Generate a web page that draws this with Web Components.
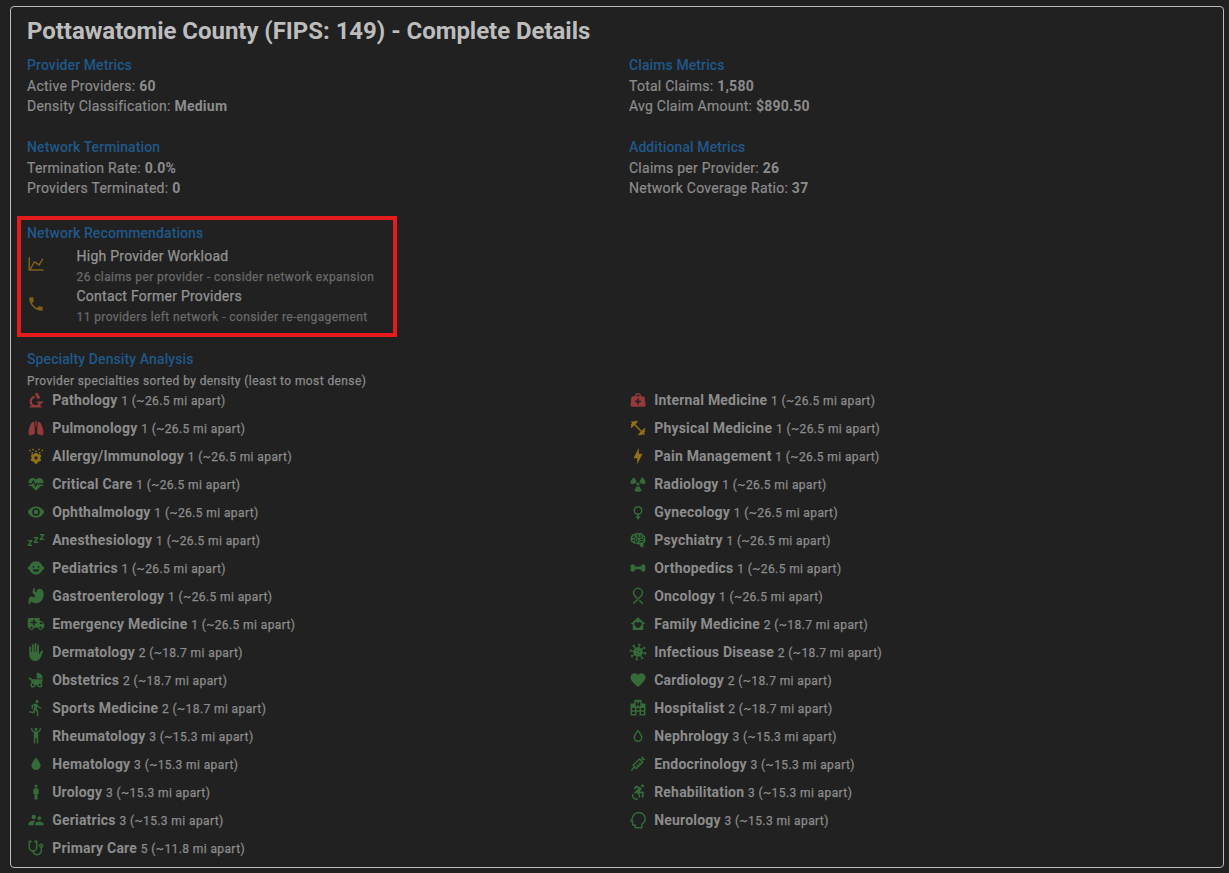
<!DOCTYPE html>
<html lang="en">
<head>
<meta charset="utf-8">
<title>County details</title>
<style>
html,body{margin:0;height:100%;background:#212121}
body{font-family:Roboto,"Liberation Sans",sans-serif;color:#8c8c8c;overflow:hidden}
</style>
</head>
<body>
<county-details></county-details>
<script>
const ICONS = {
  chart:'<path d="M16,11.78L20.24,4.45L21.97,5.45L16.74,14.5L10.23,10.75L5.46,19H22V21H2V3H4V17.54L9.5,8L16,11.78Z"/>',
  phone:'<path d="M6.62,10.79C8.06,13.62 10.38,15.94 13.21,17.38L15.41,15.18C15.69,14.9 16.08,14.82 16.43,14.93C17.55,15.3 18.75,15.5 20,15.5A1,1 0 0,1 21,16.5V20A1,1 0 0,1 20,21A17,17 0 0,1 3,4A1,1 0 0,1 4,3H7.5A1,1 0 0,1 8.5,4C8.5,5.25 8.7,6.45 9.07,7.57C9.18,7.92 9.1,8.31 8.82,8.59L6.62,10.79Z"/>',
  microscope:'<path d="M9.46,6.28L11.05,9C8.47,9.26 6.5,11.41 6.5,14A5,5 0 0,0 11.5,19C13.55,19 15.31,17.77 16.08,16H13.5V14H21.5V16H19.25C18.84,17.57 17.97,18.96 16.79,20H19.5V22H3.5V20H6.21C4.55,18.53 3.5,16.39 3.5,14C3.5,10.37 5.96,7.2 9.46,6.28M12.74,2.07L13.5,3.37L14.36,2.87L17.86,8.93L14.39,10.93L10.89,4.87L11.76,4.37L11,3.07L12.74,2.07Z"/>',
  lungs:'<path d="M11.2,2H12.8V10.2H11.2ZM9.9,4.6C8.2,2.8 6.4,4.4 5.1,6.9C3.2,10.4 2,14.8 2,18.6C2,21.4 3.2,22.3 5.4,21.6L9,20.2C10,19.8 10.4,19.2 10.4,18.2V11.4L9.9,10.9ZM14.1,4.6C15.8,2.8 17.6,4.4 18.9,6.9C20.8,10.4 22,14.8 22,18.6C22,21.4 20.8,22.3 18.6,21.6L15,20.2C14,19.8 13.6,19.2 13.6,18.2V11.4L14.1,10.9Z"/>',
  pollen:'<path fill-rule="evenodd" d="M12,7.6C13.5,7.6 14.6,8.6 14.7,9.8C17,8.9 19.2,10.3 18.8,12.4C18.6,13.4 18.1,14.1 17.3,14.6C19.4,16 19,18.7 16.9,19.3C16.1,19.5 15.4,19.5 14.7,19.2C14.6,21 13.5,22.3 12,22.3C10.5,22.3 9.4,21 9.3,19.2C7,20 4.9,18.9 5.1,16.8C5.2,15.8 5.8,15.1 6.7,14.6C4.6,13.3 4.8,10.5 7,9.8C7.8,9.5 8.6,9.5 9.3,9.8C9.4,8.6 10.5,7.6 12,7.6M12,12.4A2.2,2.2 0 1,0 12,16.8A2.2,2.2 0 1,0 12,12.4Z"/><path d="M3,3.5H5V5.5H3ZM6,7H8V9H6ZM7,2.2H9V4.2H7ZM10.8,4.7H12.8V6.5H10.8ZM15,2.2H17V4.2H15ZM16,6.7H18V8.7H16ZM19.4,3.5H21.4V5.5H19.4Z"/>',
  pulse:'<path d="M7.5,4A5.5,5.5 0 0,0 2,9.5C2,10 2.09,10.5 2.22,11H6.3L7.57,7.63C7.87,6.83 9.05,6.75 9.43,7.63L11.5,13L12.09,11.58C12.22,11.25 12.57,11 13,11H21.78C21.91,10.5 22,10 22,9.5A5.5,5.5 0 0,0 16.5,4C14.64,4 13,4.93 12,6.34C11,4.93 9.36,4 7.5,4M3,12.5A1,1 0 0,0 2,13.5A1,1 0 0,0 3,14.5H5.44L11,20C12,20.9 12,20.9 13,20L18.56,14.5H21A1,1 0 0,0 22,13.5A1,1 0 0,0 21,12.5H13.4L12.47,14.8C12.07,15.81 10.92,15.67 10.55,14.83L8.5,9.5L7.54,11.83C7.39,12.21 7.05,12.5 6.6,12.5H3Z"/>',
  eye:'<path d="M12,9A3,3 0 0,0 9,12A3,3 0 0,0 12,15A3,3 0 0,0 15,12A3,3 0 0,0 12,9M12,17A5,5 0 0,1 7,12A5,5 0 0,1 12,7A5,5 0 0,1 17,12A5,5 0 0,1 12,17M12,4.5C7,4.5 2.73,7.61 1,12C2.73,16.39 7,19.5 12,19.5C17,19.5 21.27,16.39 23,12C21.27,7.61 17,4.5 12,4.5Z"/>',
  sleep:'<path d="M23,12H17V10L20.39,6H17V4H23V6L19.62,10H23V12M15,16H9V14L12.39,10H9V8H15V10L11.62,14H15V16M7,20H1V18L4.39,14H1V12H7V14L3.62,18H7V20Z"/>',
  baby:'<path fill-rule="evenodd" d="M12,3C16,3 19.3,5.6 20.5,9.2C21.9,9.6 23,10.7 23,12C23,13.3 21.9,14.4 20.5,14.8C19.3,18.4 16,21 12,21C8,21 4.7,18.4 3.5,14.8C2.1,14.4 1,13.3 1,12C1,10.7 2.1,9.6 3.5,9.2C4.7,5.6 8,3 12,3M8.5,9.2A1.25,1.25 0 1,0 8.5,11.7A1.25,1.25 0 1,0 8.5,9.2M15.5,9.2A1.25,1.25 0 1,0 15.5,11.7A1.25,1.25 0 1,0 15.5,9.2M7.5,14C8.2,15.9 9.9,17 12,17C14.1,17 15.8,15.9 16.5,14Z"/>',
  stomach:'<path d="M8.5,1.5H10.5V4.5C10.5,6 11.3,7 12.6,7C12.6,4.2 14.4,2.4 17,2.4C20.4,2.4 22.3,5.3 22.3,9.6C22.3,16.2 18.2,21.6 12,21.6C9.5,21.6 7.3,20.7 6,19.4C5.1,19.6 4.8,20.4 4.8,22.3H2V20.5C2,17.2 2.6,14.4 4.4,13.1C5.7,12.2 7.3,12.6 8.4,13.4C9.5,14.1 10.8,13.4 10.6,12C10.3,10 8.2,9.4 7.4,7.3C6.8,5.7 8.5,4.2 8.5,1.5Z"/>',
  ambulance:'<path d="M18,18.5A1.5,1.5 0 0,0 19.5,17A1.5,1.5 0 0,0 18,15.5A1.5,1.5 0 0,0 16.5,17A1.5,1.5 0 0,0 18,18.5M19.5,9.5H17V12H21.46L19.5,9.5M6,18.5A1.5,1.5 0 0,0 7.5,17A1.5,1.5 0 0,0 6,15.5A1.5,1.5 0 0,0 4.5,17A1.5,1.5 0 0,0 6,18.5M20,8L23,12V17H21A3,3 0 0,1 18,20A3,3 0 0,1 15,17H9A3,3 0 0,1 6,20A3,3 0 0,1 3,17H1V6C1,4.89 1.89,4 3,4H17V8H20M8,6V9H5V11H8V14H10V11H13V9H10V6H8Z"/>',
  hand:'<path transform="matrix(-1 0 0 1 24 0)" d="M13 24C9.74 24 6.81 22 5.6 19L2.57 11.37C2.26 10.58 3 9.79 3.81 10.05L4.6 10.31C5.16 10.5 5.62 10.92 5.84 11.47L7.25 15H8V3.25C8 2.56 8.56 2 9.25 2C9.94 2 10.5 2.56 10.5 3.25V12H11.5V1.25C11.5 .56 12.06 0 12.75 0C13.44 0 14 .56 14 1.25V12H15V2.75C15 2.06 15.56 1.5 16.25 1.5S17.5 2.06 17.5 2.75V12H18.5V5.75C18.5 5.06 19.06 4.5 19.75 4.5S21 5.06 21 5.75V16C21 20.42 17.42 24 13 24Z"/>',
  carriage:'<path d="M13,2V10H21A8,8 0 0,0 13,2M19.32,15.89C20.37,14.54 21,12.84 21,11H6.44L5.5,9H2V11H4.22C4.22,11 6.11,15.07 6.34,15.42C5.24,16 4.5,17.17 4.5,18.5A3.5,3.5 0 0,0 8,22C9.76,22 11.22,20.7 11.46,19H13.54C13.78,20.7 15.24,22 17,22A3.5,3.5 0 0,0 20.5,18.5C20.5,17.46 20.04,16.53 19.32,15.89M8,20A1.5,1.5 0 0,1 6.5,18.5A1.5,1.5 0 0,1 8,17A1.5,1.5 0 0,1 9.5,18.5A1.5,1.5 0 0,1 8,20M17,20A1.5,1.5 0 0,1 15.5,18.5A1.5,1.5 0 0,1 17,17A1.5,1.5 0 0,1 18.5,18.5A1.5,1.5 0 0,1 17,20Z"/>',
  run:'<path d="M13.49,5.48C14.59,5.48 15.49,4.58 15.49,3.48C15.49,2.38 14.59,1.48 13.49,1.48C12.39,1.48 11.49,2.38 11.49,3.48C11.49,4.58 12.39,5.48 13.49,5.48M9.89,19.38L10.89,14.98L12.99,16.98V22.98H14.99V15.48L12.89,13.48L13.49,10.48C14.79,11.98 16.79,12.98 18.99,12.98V10.98C17.09,10.98 15.49,9.98 14.69,8.58L13.69,6.98C13.29,6.38 12.69,5.98 11.99,5.98C11.69,5.98 11.49,6.08 11.19,6.08L5.99,8.28V12.98H7.99V9.58L9.79,8.88L8.19,16.98L3.29,15.98L2.89,17.98L9.89,19.38Z"/>',
  handsup:'<path d="M5,1C5,3.7 6.56,6.16 9,7.32V22H11V15H13V22H15V7.31C17.44,6.16 19,3.7 19,1H17A5,5 0 0,1 12,6A5,5 0 0,1 7,1M12,1C10.89,1 10,1.89 10,3A2,2 0 0,0 12,5A2,2 0 0,0 14,3C14,1.89 13.11,1 12,1Z"/>',
  water:'<path d="M12,20A6,6 0 0,1 6,14C6,10 12,3.25 12,3.25C12,3.25 18,10 18,14A6,6 0 0,1 12,20Z"/>',
  male:'<path d="M12,2A2,2 0 0,1 14,4A2,2 0 0,1 12,6A2,2 0 0,1 10,4A2,2 0 0,1 12,2M10.5,7H13.5A2,2 0 0,1 15.5,9V14.5H14V22H10V14.5H8.5V9A2,2 0 0,1 10.5,7Z"/>',
  people:'<path d="M16.5,12A2.5,2.5 0 0,0 19,9.5A2.5,2.5 0 0,0 16.5,7A2.5,2.5 0 0,0 14,9.5A2.5,2.5 0 0,0 16.5,12M9,11A3,3 0 0,0 12,8A3,3 0 0,0 9,5A3,3 0 0,0 6,8A3,3 0 0,0 9,11M16.5,14C14.67,14 11,14.92 11,16.75V19H22V16.75C22,14.92 18.33,14 16.5,14M9,13C6.67,13 2,14.17 2,16.5V19H9V16.75C9,15.9 9.33,14.41 11.37,13.28C10.5,13.1 9.66,13 9,13Z"/>',
  stethoscope:'<path d="M19,8C19.56,8 20,8.43 20,9A1,1 0 0,1 19,10C18.43,10 18,9.55 18,9C18,8.43 18.43,8 19,8M2,2V11C2,13.96 4.19,16.5 7.14,16.91C7.76,19.92 10.42,22 13.5,22A6.5,6.5 0 0,0 20,15.5V11.81C21.16,11.39 22,10.29 22,9A3,3 0 0,0 19,6A3,3 0 0,0 16,9C16,10.29 16.84,11.4 18,11.81V15.41C18,17.91 16,19.91 13.5,19.91C11.5,19.91 9.82,18.7 9.22,16.9C12,16.3 14,13.8 14,11V2H10V5H12V11A4,4 0 0,1 8,15A4,4 0 0,1 4,11V5H6V2H2Z"/>',
  bag:'<path d="M10,3L8,5V7H5C3.85,7 3.12,8 3,9L2,19C1.88,20 2.54,21 4,21H20C21.46,21 22.12,20 22,19L21,9C20.88,8 20.06,7 19,7H16V5L14,3H10M10,5H14V7H10V5M11,10H13V13H16V15H13V18H11V15H8V13H11V10Z"/>',
  dumbbell:'<path d="M20.57,14.86L22,13.43L20.57,12L17,15.57L8.43,7L12,3.43L10.57,2L9.14,3.43L7.71,2L5.57,4.14L4.14,2.71L2.71,4.14L4.14,5.57L2,7.71L3.43,9.14L2,10.57L3.43,12L7,8.43L15.57,17L12,20.57L13.43,22L14.86,20.57L16.29,22L18.43,19.86L19.86,21.29L21.29,19.86L19.86,18.43L22,16.29L20.57,14.86Z"/>',
  bolt:'<path d="M11 15H6L13 1V9H18L11 23V15Z"/>',
  radio:'<circle cx="12" cy="12" r="2.1"/><path d="M1.8,11.8A10.2,10.2 0 0,1 6.9,3L10.3,9A3.5,3.5 0 0,0 8.5,11.8ZM22.2,11.8A10.2,10.2 0 0,0 17.1,3L13.7,9A3.5,3.5 0 0,1 15.5,11.8ZM6.9,21.1A10.2,10.2 0 0,0 17.1,21.1L13.8,15A3.5,3.5 0 0,1 10.2,15Z"/>',
  female:'<path d="M12,4A6,6 0 0,1 18,10C18,12.97 15.84,15.44 13,15.92V18H15V20H13V22H11V20H9V18H11V15.92C8.16,15.44 6,12.97 6,10A6,6 0 0,1 12,4M12,6A4,4 0 0,0 8,10A4,4 0 0,0 12,14A4,4 0 0,0 16,10A4,4 0 0,0 12,6Z"/>',
  brain:'<path d="M8,3.6C9.3,2 12,2 13.2,3C15.8,2 18.4,3.2 19.2,5.2C21.6,6.2 22.8,9 21.8,11.2C22.6,13.6 21.2,16 19.2,16.6C19.7,18.4 20,20.8 18,21.7C15.8,22.2 14.6,19.8 14,17.6C12.8,18.2 10.8,18 10,16.8C8,17.5 5.6,16.8 4.8,15C2.2,14.4 1.2,11.6 2.2,9.2C2.4,5.6 5.2,3.6 8,3.6Z"/><path fill="none" stroke="#212121" stroke-width="1.5" stroke-linecap="round" d="M5,8.5C6.6,8.8 7.5,7.8 7.2,6.2M5,12.2C7,12.8 9.2,11.8 9.3,9.4M10.8,5C12.6,5.4 13,7.6 11.4,8.8M8.5,14.5C11.2,14.7 12.3,12.8 11.8,11.8M16.3,5.3C17.2,6.6 16.4,8.3 14.6,8.5M19.4,8.8C19.6,10.6 17.4,11.7 15.2,11.1M18.7,14C16.8,14.6 15.8,13.6 14.5,14.6"/>',
  bone:'<path d="M8 14A3 3 0 0 1 5 17A3 3 0 0 1 2 14C2 13.23 2.29 12.53 2.76 12C2.29 11.47 2 10.77 2 10A3 3 0 0 1 5 7A3 3 0 0 1 8 10C9.33 10.08 10.67 10.17 12 10.17C13.33 10.17 14.67 10.08 16 10A3 3 0 0 1 19 7A3 3 0 0 1 22 10C22 10.77 21.71 11.47 21.24 12C21.71 12.53 22 13.23 22 14A3 3 0 0 1 19 17A3 3 0 0 1 16 14C14.67 13.92 13.33 13.83 12 13.83C10.67 13.83 9.33 13.92 8 14Z"/>',
  ribbon:'<path fill="none" stroke="currentColor" stroke-width="2" d="M5.6,22.2L14.9,13.3C17,11.4 18,9.9 18,7.8A6,6 0 0,0 6,7.8C6,9.9 7,11.4 9.1,13.3L10.6,14.8M13.6,17.6L18.4,22.2"/>',
  home:'<path fill-rule="evenodd" d="M12,3L2,12H5V20H19V12H22ZM12,18L11.3,17.4C8.8,15.2 7.2,13.8 7.2,12C7.2,10.5 8.3,9.4 9.8,9.4C10.6,9.4 11.4,9.8 12,10.4C12.6,9.8 13.4,9.4 14.2,9.4C15.7,9.4 16.8,10.5 16.8,12C16.8,13.8 15.2,15.2 12.7,17.4Z"/>',
  virus:'<circle cx="12" cy="12" r="6.3"/><g transform="rotate(10 12 12)" stroke="currentColor" stroke-width="1.7"><path d="M12,2V22M2,12H22M5,5L19,19M19,5L5,19"/><path stroke-width="1.9" d="M10.4,1.8H13.6M10.4,22.2H13.6M1.8,10.4V13.6M22.2,10.4V13.6M3.7,6.1L6.1,3.7M17.9,3.7L20.3,6.1M3.7,17.9L6.1,20.3M17.9,20.3L20.3,17.9"/></g><g fill="#212121"><circle cx="10.2" cy="9.8" r=".9"/><circle cx="14" cy="11.6" r=".8"/><circle cx="11" cy="14.3" r=".8"/></g>',
  heart:'<path d="M12,21.35L10.55,20.03C5.4,15.36 2,12.27 2,8.5C2,5.41 4.42,3 7.5,3C9.24,3 10.91,3.81 12,5.08C13.09,3.81 14.76,3 16.5,3C19.58,3 22,5.41 22,8.5C22,12.27 18.6,15.36 13.45,20.03L12,21.35Z"/>',
  hospital:'<path d="M2,22V7A1,1 0 0,1 3,6H7V2A1,1 0 0,1 8,1H16A1,1 0 0,1 17,2V6H21A1,1 0 0,1 22,7V22H14V17H10V22H2M9,4V10H11V8H13V10H15V4H13V6H11V4H9M4,20H8V17H4V20M4,15H8V12H4V15M16,20H20V17H16V20M16,15H20V12H16V15M10,15H14V12H10V15Z"/>',
  drop:'<path fill-rule="evenodd" d="M12,20A6,6 0 0,1 6,14C6,10 12,3.25 12,3.25C12,3.25 18,10 18,14A6,6 0 0,1 12,20M12,6.4C10,8.9 8,12 8,14A4,4 0 0,0 16,14C16,12 14,8.9 12,6.4Z"/>',
  needle:'<path d="M11.15,15.18L9.73,13.77L11.15,12.35L12.56,13.77L13.97,12.35L12.56,10.94L13.97,9.53L15.39,10.94L16.8,9.53L13.97,6.7L6.9,13.77L9.73,16.6L11.15,15.18M3.08,19L6.2,15.89L4.08,13.77L13.97,3.87L16.1,6L17.5,4.58L16.1,3.16L17.5,1.75L21.75,6L20.34,7.4L18.92,6L17.5,7.4L19.63,9.53L9.73,19.42L7.61,17.3L3.08,21.84V19Z"/>',
  wheelchair:'<path d="M18.4,11.2L14.3,11.4L16.6,8.8C16.8,8.5 16.9,8 16.8,7.5C16.7,7.2 16.6,6.9 16.3,6.7L10.9,3.5C10.5,3.2 9.9,3.3 9.5,3.6L6.8,6.1C6.3,6.6 6.2,7.3 6.7,7.8C7.1,8.3 7.9,8.3 8.4,7.9L10.4,6.1L12.3,7.2L8.1,11.5C8,11.6 8,11.7 7.9,11.7C7.4,11.9 6.9,12.1 6.5,12.4L8,13.9C8.5,13.7 9,13.5 9.5,13.5C11.4,13.5 13,15.1 13,17C13,17.6 12.9,18.1 12.6,18.5L14.1,20C14.7,19.1 15,18.1 15,17C15,15.8 14.6,14.6 13.9,13.7L17.2,13.4L17,18.2C16.9,18.9 17.4,19.4 18.1,19.5H18.2C18.8,19.5 19.3,19 19.4,18.4L19.6,12.5C19.6,12.2 19.5,11.8 19.3,11.6C19,11.3 18.7,11.2 18.4,11.2M18,5.5A2,2 0 0,0 20,3.5A2,2 0 0,0 18,1.5A2,2 0 0,0 16,3.5A2,2 0 0,0 18,5.5M12.5,21.6C11.6,22.2 10.6,22.5 9.5,22.5C6.5,22.5 4,20 4,17C4,15.9 4.3,14.9 4.9,14L6.4,15.5C6.2,16 6,16.5 6,17C6,18.9 7.6,20.5 9.5,20.5C10.1,20.5 10.6,20.4 11,20.1L12.5,21.6Z"/>',
  head:'<path fill="none" stroke="currentColor" stroke-width="1.9" d="M13,1.9C8.7,1.9 5.1,5.2 4.7,9.4L2.4,13.4H4.7V16.5C4.7,18 5.6,19 7.2,19H8.3V22.3H17.2V17.4C19.8,16 21.5,13.4 21.5,10.3C21.5,5.6 17.7,1.9 13,1.9Z"/>'
};

const define = (name, css, html) => customElements.define(name, class extends HTMLElement {
  constructor() {
    super();
    this.attachShadow({mode: 'open'}).innerHTML =
      `<style>${css}</style>${typeof html === 'function' ? html(this) : html}`;
  }
});

define('mdi-icon',
  ':host{display:block;width:18px;height:18px;flex:none}svg{display:block;width:18px;height:18px;fill:currentColor}',
  el => `<svg viewBox="0 0 24 24" aria-hidden="true">${ICONS[el.getAttribute('name')]}</svg>`);

define('section-title',
  ':host{display:block;font-size:14px;line-height:22px;font-weight:500;letter-spacing:.1px;color:#20588a}',
  '<slot></slot>');

define('metric-line',
  ':host{display:block;font-size:14px;line-height:20px;letter-spacing:.25px;-webkit-text-stroke:.2px currentColor}b{font-weight:700;-webkit-text-stroke:0}',
  el => `${el.getAttribute('label')}: <b><slot></slot></b>`);

define('metric-group', ':host{display:block}',
  el => `<section-title>${el.getAttribute('heading')}</section-title><slot></slot>`);

define('recommendation-item',
  ':host{display:flex;height:40px;-webkit-text-stroke:.25px currentColor}mdi-icon{color:#7c5f18;margin:9px 31.5px 0 0}.t{font-size:14px;line-height:20px;letter-spacing:.25px;color:#949494}.s{font-size:12px;line-height:20px;letter-spacing:.4px;color:#6a6a6a;padding-top:1px}',
  el => `<mdi-icon name="${el.getAttribute('icon')}"></mdi-icon><div><div class="t">${el.getAttribute('heading')}</div><div class="s"><slot></slot></div></div>`);

define('specialty-item',
  ':host{display:flex;align-items:center;height:28px}mdi-icon{margin-right:7.2px}.red{color:#943a3a}.amber{color:#93701a}.green{color:#346b38}b{font-size:14px;font-weight:700;letter-spacing:.2px}span{font-size:12px;letter-spacing:.4px;-webkit-text-stroke:.25px currentColor}div{font-size:14px;letter-spacing:.25px;line-height:20px}',
  el => `<mdi-icon class="${el.getAttribute('tone')}" name="${el.getAttribute('icon')}"></mdi-icon><div><b>${el.getAttribute('label')}</b> <span><slot></slot></span></div>`);

const rows = [
 ['microscope','Pathology','red',1],['bag','Internal Medicine','red',1],
 ['lungs','Pulmonology','red',1],['dumbbell','Physical Medicine','amber',1],
 ['pollen','Allergy/Immunology','amber',1],['bolt','Pain Management','amber',1],
 ['pulse','Critical Care','green',1],['radio','Radiology','green',1],
 ['eye','Ophthalmology','green',1],['female','Gynecology','green',1],
 ['sleep','Anesthesiology','green',1],['brain','Psychiatry','green',1],
 ['baby','Pediatrics','green',1],['bone','Orthopedics','green',1],
 ['stomach','Gastroenterology','green',1],['ribbon','Oncology','green',1],
 ['ambulance','Emergency Medicine','green',1],['home','Family Medicine','green',2],
 ['hand','Dermatology','green',2],['virus','Infectious Disease','green',2],
 ['carriage','Obstetrics','green',2],['heart','Cardiology','green',2],
 ['run','Sports Medicine','green',2],['hospital','Hospitalist','green',2],
 ['handsup','Rheumatology','green',3],['drop','Nephrology','green',3],
 ['water','Hematology','green',3],['needle','Endocrinology','green',3],
 ['male','Urology','green',3],['wheelchair','Rehabilitation','green',3],
 ['people','Geriatrics','green',3],['head','Neurology','green',3],
 ['stethoscope','Primary Care','green',5]];
const distance = {1:'26.5', 2:'18.7', 3:'15.3', 5:'11.8'};

define('county-details', `
  :host{display:block;box-sizing:border-box;height:873px;padding:6px 5px 5px 10px}
  main{box-sizing:border-box;height:862px;border:1px solid #bcbcbc;border-radius:4px;padding:8px 16px}
  h1{margin:0;font-size:24px;line-height:32px;font-weight:700;letter-spacing:-.04px;color:#bdbdbd}
  .grid{display:grid;grid-template-columns:578px 578px;column-gap:24px}
  .metrics{margin-top:7px;row-gap:20px}
  .recommend{position:relative;margin-top:24px}
  .recommend section-title{margin-bottom:2px}
  .recommend::before{content:"";position:absolute;left:-10.5px;top:-6px;width:372px;height:113px;border:4px solid #e61b1b}
  .specialties{margin-top:22px}
  p{margin:0;padding-top:1px;font-size:12px;line-height:20px;letter-spacing:.4px;-webkit-text-stroke:.25px currentColor}
  .list{margin-top:-5px}`,
 `<main>
   <h1>Pottawatomie County (FIPS: 149) - Complete Details</h1>
   <div class="grid metrics">
     <metric-group heading="Provider Metrics"><metric-line label="Active Providers">60</metric-line><metric-line label="Density Classification">Medium</metric-line></metric-group>
     <metric-group heading="Claims Metrics"><metric-line label="Total Claims">1,580</metric-line><metric-line label="Avg Claim Amount">$890.50</metric-line></metric-group>
     <metric-group heading="Network Termination"><metric-line label="Termination Rate">0.0%</metric-line><metric-line label="Providers Terminated">0</metric-line></metric-group>
     <metric-group heading="Additional Metrics"><metric-line label="Claims per Provider">26</metric-line><metric-line label="Network Coverage Ratio">37</metric-line></metric-group>
   </div>
   <section class="recommend">
     <section-title>Network Recommendations</section-title>
     <recommendation-item icon="chart" heading="High Provider Workload">26 claims per provider - consider network expansion</recommendation-item>
     <recommendation-item icon="phone" heading="Contact Former Providers">11 providers left network - consider re-engagement</recommendation-item>
   </section>
   <section class="specialties">
     <section-title>Specialty Density Analysis</section-title>
     <p>Provider specialties sorted by density (least to most dense)</p>
     <div class="grid list">${rows.map(([icon, name, tone, n]) =>
       `<specialty-item icon="${icon}" label="${name}" tone="${tone}">${n} (~${distance[n]} mi apart)</specialty-item>`).join('')}</div>
   </section>
 </main>`);
</script>
</body>
</html>
